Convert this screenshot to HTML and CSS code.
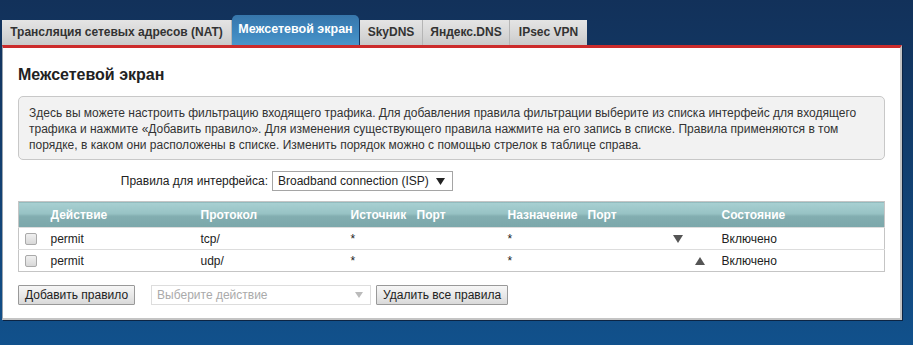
FILE: index.html
```html
<!DOCTYPE html>
<html>
<head>
<meta charset="utf-8">
<link rel="stylesheet" href="styles.css">
</head>
<body>
<div class="page">
  <div class="tabs">
    <div class="tab w-nat">Трансляция сетевых адресов (NAT)</div>
    <div class="tab active">Межсетевой экран</div>
    <div class="tab w-sky">SkyDNS</div>
    <div class="tab w-ya">Яндекс.DNS</div>
    <div class="tab w-ip">IPsec VPN</div>
  </div>
  <div class="panel">
    <h1 class="title">Межсетевой экран</h1>
    <div class="info">Здесь вы можете настроить фильтрацию входящего трафика. Для добавления правила фильтрации выберите из списка интерфейс для входящего трафика и нажмите «Добавить правило». Для изменения существующего правила нажмите на его запись в списке. Правила применяются в том порядке, в каком они расположены в списке. Изменить порядок можно с помощью стрелок в таблице справа.</div>
    <div class="iface">
      <span class="iface-label">Правила для интерфейса:</span>
      <div class="select">
        <span>Broadband connection (ISP)</span>
        <svg class="caret" width="9" height="7" viewBox="0 0 9 7"><path d="M0 0H9L4.5 7Z" fill="#222"/></svg>
      </div>
    </div>
    <table class="rules">
      <colgroup>
        <col class="c-chk"><col class="c-act"><col class="c-proto"><col class="c-src"><col class="c-sport"><col class="c-dst"><col class="c-dport"><col class="c-arr"><col class="c-state">
      </colgroup>
      <thead>
        <tr><th></th><th>Действие</th><th>Протокол</th><th>Источник</th><th>Порт</th><th>Назначение</th><th>Порт</th><th></th><th>Состояние</th></tr>
      </thead>
      <tbody>
        <tr>
          <td><span class="chk"></span></td><td>permit</td><td>tcp/</td><td>*</td><td></td><td>*</td><td></td>
          <td class="arr-cell"><span class="arrows"><svg class="arrow" width="10" height="8" viewBox="0 0 10 8"><path d="M0 0H10L5 8Z" fill="#555"/></svg><span class="arrow-slot"></span></span></td>
          <td>Включено</td>
        </tr>
        <tr>
          <td><span class="chk"></span></td><td>permit</td><td>udp/</td><td>*</td><td></td><td>*</td><td></td>
          <td class="arr-cell"><span class="arrows"><span class="arrow-slot"></span><svg class="arrow" width="10" height="8" viewBox="0 0 10 8"><path d="M5 0L10 8H0Z" fill="#555"/></svg></span></td>
          <td>Включено</td>
        </tr>
      </tbody>
    </table>
    <div class="actions">
      <button class="btn">Добавить правило</button>
      <div class="select disabled">
        <span>Выберите действие</span>
        <svg class="caret" width="8" height="6" viewBox="0 0 8 6"><path d="M0 0H8L4 6Z" fill="#bbb"/></svg>
      </div>
      <button class="btn">Удалить все правила</button>
    </div>
  </div>
</div>
</body>
</html>
```
FILE: styles.css
```css
html, body {
  margin: 0;
  padding: 0;
}
body {
  width: 913px;
  height: 345px;
  overflow: hidden;
  background: linear-gradient(180deg, #12315a 0%, #123e6e 45%, #11518c 100%);
  font-family: "Liberation Sans", Arial, sans-serif;
  font-size: 12px;
  color: #333;
}
.page {
  padding-top: 15px;
}
.tabs {
  display: flex;
  align-items: flex-end;
  margin-left: 2px;
  height: 30px;
}
.tab {
  height: 25px;
  line-height: 25px;
  box-sizing: border-box;
  text-align: center;
  font-weight: bold;
  font-size: 12px;
  color: #333;
  background: linear-gradient(180deg, #e4e4e4 0%, #d6d6d6 60%, #c9c9c9 100%);
  border-right: 1px solid #b5b5b5;
}
.w-nat { width: 230px; }
.w-sky { width: 63px; }
.w-ya { width: 87px; }
.w-ip { width: 77px; border-right: none; }
.tab.active {
  width: 127px;
  height: 30px;
  line-height: 29px;
  color: #fff;
  font-size: 12.5px;
  border-radius: 5px 5px 0 0;
  border-right: none;
  background: linear-gradient(180deg, #3776ab 0%, #3f88bf 60%, #4a95c9 100%);
  margin-right: 1px;
}
.panel {
  margin-left: 2px;
  width: 900px;
  box-sizing: border-box;
  background: #fff;
  border-top: 3px solid #cc2b2b;
  border-left: 1px solid #9aa3ad;
  border-right: 2px solid #c4c4c4;
  border-bottom: 2px solid #c4c4c4;
  box-shadow: 1px 1px 0 #0c2443;
  padding: 17px 15px 14px 15px;
  height: 275px;
}
.title {
  margin: 0;
  font-size: 16px;
  line-height: 20px;
  font-weight: bold;
  color: #222;
}
.info {
  margin-top: 11px;
  width: 867px;
  box-sizing: border-box;
  background: #f2f2f2;
  border: 1px solid #c8c8c8;
  border-radius: 5px;
  padding: 8px 10px 9px 10px;
  line-height: 16px;
  font-size: 12px;
  color: #333;
  height: 64px;
}
.iface {
  margin-top: 11px;
  display: flex;
  align-items: center;
  height: 20px;
}
.iface-label {
  width: 250px;
  text-align: right;
  margin-right: 4px;
  color: #222;
}
.select {
  width: 181px;
  height: 20px;
  box-sizing: border-box;
  border: 1px solid #a5a5a5;
  display: flex;
  align-items: center;
  justify-content: space-between;
  padding: 0 7px 0 5px;
  color: #222;
  background: #fff;
}
.rules {
  margin-top: 10px;
  width: 867px;
  border-collapse: collapse;
  border: 1px solid #c5c5c5;
  table-layout: fixed;
}
.c-chk { width: 26px; }
.c-act { width: 150px; }
.c-proto { width: 150px; }
.c-src { width: 66px; }
.c-sport { width: 91px; }
.c-dst { width: 80px; }
.c-dport { width: 84px; }
.c-arr { width: 50px; }
.c-state { width: auto; }
.rules th {
  height: 26px;
  box-sizing: border-box;
  text-align: left;
  padding: 0 6px;
  color: #fff;
  font-weight: bold;
  font-size: 12px;
  background: linear-gradient(180deg, #a8d0d2 0%, #97c2c4 45%, #82adb0 55%, #7ba7aa 100%);
  border-top: 1px solid #c5c5c5;
}
.rules td {
  height: 22px;
  box-sizing: border-box;
  padding: 0 6px;
  color: #222;
  border-top: 1px solid #ddd;
  vertical-align: middle;
}
.rules td.arr-cell {
  padding: 0 0 0 7px;
}
.chk {
  display: block;
  width: 12px;
  height: 12px;
  box-sizing: border-box;
  border: 1px solid #aaa;
  border-radius: 2px;
  background: linear-gradient(180deg, #f0f0f0, #d8d8d8);
}
.arrows {
  display: flex;
  align-items: center;
}
.arrow-slot {
  flex: 0 0 22px;
  height: 8px;
}
.arrow {
  display: block;
  flex: 0 0 10px;
}
.actions {
  margin-top: 13px;
  display: flex;
  align-items: center;
}
.btn {
  height: 20px;
  box-sizing: border-box;
  padding: 0 6px;
  font-family: "Liberation Sans", Arial, sans-serif;
  font-size: 12px;
  color: #222;
  border: 1px solid #999;
  border-radius: 1px;
  background: linear-gradient(180deg, #f6f6f6 0%, #e6e6e6 60%, #d9d9d9 100%);
}
.select.disabled {
  width: 220px;
  margin: 0 5px 0 16px;
  border-color: #ddd;
  color: #aaa;
  padding: 0 7px 0 5px;
}
```
